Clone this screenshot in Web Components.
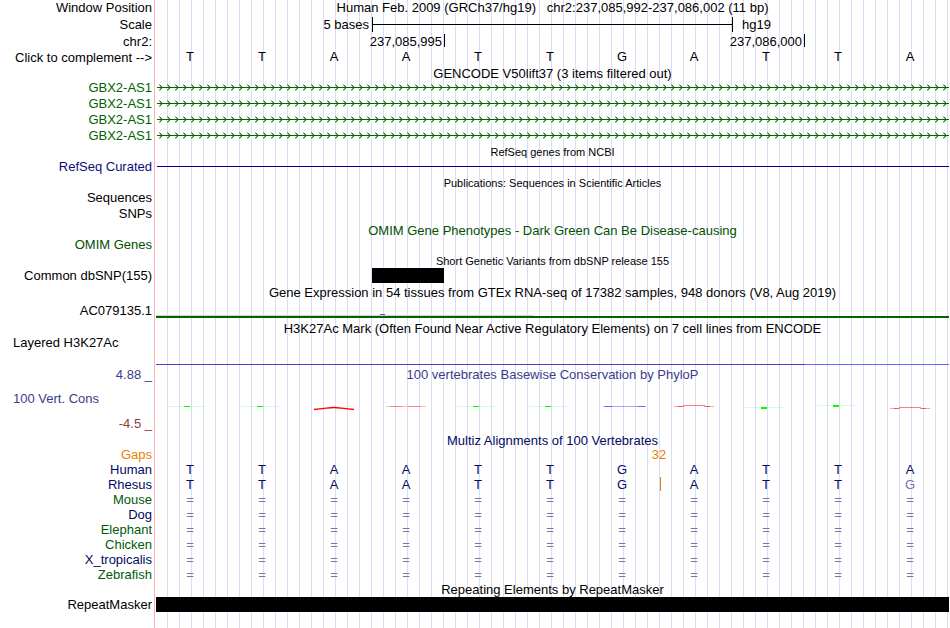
<!DOCTYPE html>
<html lang="en">
<head>
<meta charset="utf-8">
<title>Genome Browser chr2:237,085,992-237,086,002</title>
<style>
body { margin: 0; background: #fff; }
</style>
</head>
<body>
<genome-view></genome-view>

<template id="view-template">
<style>
:host {
  --label-width: 152px;
  --navy: #000a64;
  --forest: #005a0a;
  --green: #006400;
  --gap: #e68200;
  display: block;
  box-sizing: border-box;
  min-height: 100vh;
  padding-right: 1px;
  font: 13px/15px "Liberation Sans", Arial, sans-serif;
  color: #000;
  background:
    linear-gradient(#ffb4b4, #ffb4b4) 154px 0 / 1px 100% no-repeat,
    repeating-linear-gradient(to right, transparent 0 11px, #dcdcf5 11px 12px) 156px 0 / calc(100% - 157px) 100% no-repeat;
}
button { font: inherit; color: inherit; background: none; border: 0; padding: 0; margin: 0; cursor: pointer; }
track-row.h14 { min-height: 14px; }
track-row.h16 { min-height: 16px; }
track-row.h17 { min-height: 17px; }
.top { padding-bottom: 1px; }
.small { font-size: 11px; line-height: 17px; }
.green { color: var(--green); }
.omim { color: #005000; }
.navy { color: var(--navy); }
.forest { color: var(--forest); }
.refseq { color: #0c0c78; }
.phylo { color: #3c3c8c; }
.low { color: #8c3c3c; }
.gaps { color: var(--gap); }
.left { padding-left: 13px; text-align: left; display: block; }
.cols { display: grid; grid-template-columns: repeat(11, 1fr); padding-right: 1px; }
.bases { text-align: right; padding-right: 3px; grid-column: 1 / 4; }
.bar { grid-column: 4 / 9; height: 15px; margin-right: -1px; box-sizing: border-box; border: solid #000; border-width: 0 1px;
  background: linear-gradient(#000, #000) 0 7px / 100% 1px no-repeat; }
.asm { grid-column: 9 / 12; padding-left: 10px; }
.pos { text-align: right; padding-right: 2px; }
.tick { border-left: 1px solid #000; height: 13px; }
.rule { border-top: 1px solid #000080; margin: 7px 0 0 1px; }
.block { background: #000; height: 15px; }
.gtex { height: 2px; background: var(--green); }
.expression { margin-top: 14px; }
.expression svg { display: block; }
.mark { display: grid; grid-template-columns: 649fr 144fr; margin-top: 29px; height: 1px; }
.mark :first-child { background: #6432c8; }
.mark :last-child { background: #6464ff; }
.insert { padding-right: 2px; text-align: center; grid-column: 7 / 9; }
</style>

<track-row class="h17"><span slot="label">Window Position</span><track-title>Human Feb. 2009 (GRCh37/hg19) &nbsp; chr2:237,085,992-237,086,002 (11 bp)</track-title></track-row>
<track-row class="h17"><span slot="label">Scale</span>
  <div class="cols"><span class="bases">5 bases</span><span class="bar"></span><span class="asm">hg19</span></div></track-row>
<track-row class="top"><span slot="label">chr2:</span>
  <div class="cols"><span class="pos" style="grid-column:1/5">237,085,995</span><span class="tick"></span><span class="pos" style="grid-column:6/10">237,086,000</span><span class="tick"></span></div></track-row>
<track-row class="h16"><button slot="label" type="button">Click to complement --&gt;</button><base-row class="ruler" seq="TTAATTGATTA"></base-row></track-row>
<track-row class="h14"><track-title>GENCODE V50lift37 (3 items filtered out)</track-title></track-row>
<track-row class="h16 green"><span slot="label">GBX2-AS1</span><intron-line></intron-line></track-row>
<track-row class="h16 green"><span slot="label">GBX2-AS1</span><intron-line></intron-line></track-row>
<track-row class="h16 green"><span slot="label">GBX2-AS1</span><intron-line></intron-line></track-row>
<track-row class="h16 green"><span slot="label">GBX2-AS1</span><intron-line></intron-line></track-row>
<track-row><track-title class="small">RefSeq genes from NCBI</track-title></track-row>
<track-row class="h16 refseq"><span slot="label">RefSeq Curated</span><div class="rule"></div></track-row>
<track-row><track-title class="small">Publications: Sequences in Scientific Articles</track-title></track-row>
<track-row class="h16"><span slot="label">Sequences</span></track-row>
<track-row class="h17"><span slot="label">SNPs</span></track-row>
<track-row class="h14 omim"><track-title>OMIM Gene Phenotypes - Dark Green Can Be Disease-causing</track-title></track-row>
<track-row class="h16 omim"><span slot="label">OMIM Genes</span></track-row>
<track-row><track-title class="small">Short Genetic Variants from dbSNP release 155</track-title></track-row>
<track-row class="h17"><span slot="label">Common dbSNP(155)</span><div class="cols"><div class="block" style="grid-column:4"></div></div></track-row>
<track-row><track-title>Gene Expression in 54 tissues from GTEx RNA-seq of 17382 samples, 948 donors (V8, Aug 2019)</track-title></track-row>
<track-row style="min-height:21px"><span slot="label" style="display:block;padding-top:3px">AC079135.1</span>
  <div class="expression"><svg width="378" height="2" aria-hidden="true"><path d="M0 1h378v1H0z" fill="#d2d2d2"/><path d="M224 0h5v1h-5z" fill="#8040a0"/></svg><div class="gtex"></div></div></track-row>
<track-row class="h14"><track-title>H3K27Ac Mark (Often Found Near Active Regulatory Elements) on 7 cell lines from ENCODE</track-title></track-row>
<track-row style="min-height:32px"><span slot="label" class="left">Layered H3K27Ac</span><div class="mark"><i></i><i></i></div></track-row>
<track-row class="phylo"><span slot="label">4.88 _</span><track-title>100 vertebrates Basewise Conservation by PhyloP</track-title></track-row>
<track-row style="min-height:51px"><div slot="label" style="display:grid;gap:10px;padding-top:9px"><span class="left phylo">100 Vert. Cons</span><span class="low">-4.5 _</span></div><conservation-wiggle></conservation-wiggle></track-row>
<track-row class="h14 navy"><track-title>Multiz Alignments of 100 Vertebrates</track-title></track-row>
<track-row class="gaps"><span slot="label">Gaps</span><div class="cols"><span class="insert">32</span></div></track-row>
<track-row class="navy"><span slot="label">Human</span><base-row seq="TTAATTGATTA"></base-row></track-row>
<track-row class="navy"><span slot="label">Rhesus</span><base-row seq="TTAATTGATTg" gap-after="7"></base-row></track-row>
<track-row class="forest"><span slot="label">Mouse</span><base-row seq="==========="></base-row></track-row>
<track-row class="navy"><span slot="label">Dog</span><base-row seq="==========="></base-row></track-row>
<track-row class="forest"><span slot="label">Elephant</span><base-row seq="==========="></base-row></track-row>
<track-row class="forest"><span slot="label">Chicken</span><base-row seq="==========="></base-row></track-row>
<track-row class="navy"><span slot="label">X_tropicalis</span><base-row seq="==========="></base-row></track-row>
<track-row class="forest"><span slot="label">Zebrafish</span><base-row seq="==========="></base-row></track-row>
<track-row><track-title>Repeating Elements by RepeatMasker</track-title></track-row>
<track-row><span slot="label">RepeatMasker</span><div class="block"></div></track-row>
</template>

<script>
class TrackRow extends HTMLElement {
  constructor() {
    super();
    this.attachShadow({ mode: "open" }).innerHTML = `
      <style>
        :host { display: grid; grid-template-columns: var(--label-width) minmax(0, 1fr); column-gap: 4px; min-height: 15px; align-items: start; }
        .label { text-align: right; white-space: nowrap; }
        .data { min-width: 0; }
      </style>
      <div class="label"><slot name="label"></slot></div>
      <div class="data"><slot></slot></div>`;
  }
}

class TrackTitle extends HTMLElement {
  constructor() {
    super();
    this.attachShadow({ mode: "open" }).innerHTML = `
      <style>:host { display: block; height: 14px; text-align: center; white-space: nowrap; }</style>
      <slot></slot>`;
  }
}

/* One letter per base; lower case marks a mismatch, "=" an unaligned base. */
class BaseRow extends HTMLElement {
  connectedCallback() {
    const root = this.shadowRoot || this.attachShadow({ mode: "open" });
    const gap = Number(this.getAttribute("gap-after"));
    const cells = [...this.getAttribute("seq")].map((c, i) => {
      const cls = (c === "=" || c !== c.toUpperCase() ? "faint" : "") + (gap && i === gap ? " gap" : "");
      return `<span class="${cls}">${c.toUpperCase()}</span>`;
    }).join("");
    root.innerHTML = `
      <style>
        :host { display: grid; grid-template-columns: repeat(11, 1fr); padding-right: 1px; }
        :host(.ruler) { line-height: 13px; }
        span { text-align: center; padding-right: 4px; }
        .faint { color: #7075aa; }
        .gap { background: linear-gradient(var(--gap), var(--gap)) 0 0 / 1px 14px no-repeat; }
      </style>${cells}`;
  }
}

class IntronLine extends HTMLElement {
  constructor() {
    super();
    this.attachShadow({ mode: "open" }).innerHTML = `
      <style>:host { display: block; } svg { display: block; width: 100%; height: 15px; }</style>
      <svg aria-hidden="true">
        <defs><pattern id="chevrons" width="8" height="15" patternUnits="userSpaceOnUse">
          <path d="M5 6h1v1H5zM5 8h1v1H5zM4 5h1v1H4zM4 9h1v1H4z" fill="#006400" fill-opacity=".95"/>
          <path d="M3 4h1v1H3zM3 10h1v1H3zM4 6h1v1H4zM4 8h1v1H4zM3 5h1v1H3zM3 9h1v1H3z" fill="#006400" fill-opacity=".4"/>
        </pattern></defs>
        <rect width="100%" height="15" fill="url(#chevrons)"/>
        <rect x="1" y="7" width="100%" height="1" fill="#006400"/>
      </svg>`;
  }
}

class ConservationWiggle extends HTMLElement {
  constructor() {
    super();
    const green = (y, h, x = 12) => `<path d="M${x} ${y}h38v1H${x}z" fill="#00ff00" fill-opacity=".16"/><path d="M${x + 16} ${y}h6v${h}h-6z" fill="#00ff00"/>`;
    const arc = (y) => `<path d="M14 ${y + 1.5}H22M46 ${y + 1.5}H54" stroke="#f00" stroke-opacity=".35"/><path d="M18 ${y + 1.5}H24M44 ${y + 1.5}H50M23 ${y + .5}H45" stroke="#f00" stroke-opacity=".5"/>`;
    const plots = [
      green(24, 1),
      green(24, 1, 13),
      `<path d="M14 27.5C24 27 29 25.5 34 25.5S44 27 54 27.5" fill="none" stroke="#f00" stroke-width="1.3"/>`,
      `<path d="M14 24.5H54" stroke="#f00" stroke-opacity=".25"/><path d="M18 24.5H30M36 24.5H49" stroke="#f00" stroke-opacity=".3"/>`,
      green(24, 1, 13),
      green(24, 1, 13),
      `<path d="M15 24.5H58" stroke="#00f" stroke-opacity=".35"/><path d="M17 24.5H24M50 24.5H57" stroke="#00f" stroke-opacity=".4"/>`,
      arc(23),
      green(25, 2, 13),
      green(23, 2, 13),
      arc(25)
    ];
    this.attachShadow({ mode: "open" }).innerHTML = `
      <style>
        :host { display: grid; grid-template-columns: repeat(11, 1fr); padding-right: 1px; }
        svg { display: block; }
      </style>` + plots.map(p => `<svg width="72" height="50" aria-hidden="true">${p}</svg>`).join("");
  }
}

class GenomeView extends HTMLElement {
  constructor() {
    super();
    this.attachShadow({ mode: "open" }).append(document.getElementById("view-template").content.cloneNode(true));
  }
}

customElements.define("track-row", TrackRow);
customElements.define("track-title", TrackTitle);
customElements.define("base-row", BaseRow);
customElements.define("intron-line", IntronLine);
customElements.define("conservation-wiggle", ConservationWiggle);
customElements.define("genome-view", GenomeView);
</script>
</body>
</html>
